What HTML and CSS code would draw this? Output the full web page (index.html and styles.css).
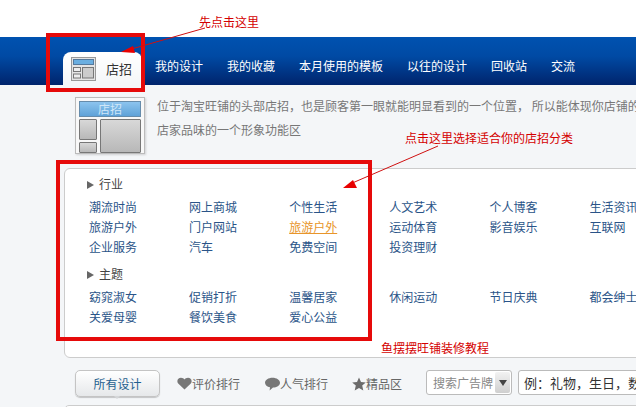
FILE: index.html
```html
<!DOCTYPE html>
<html lang="zh-CN">
<head>
  <meta charset="UTF-8" />
  <title>店招</title>
  <link rel="stylesheet" href="styles.css">
</head>
<body>
  <div class="top-space"></div>

  <nav class="nav">
    <a class="nav-tab" href="#">
      <svg class="tab-icon" width="25" height="24" viewBox="0 0 25 24">
        <rect x="0.5" y="0.5" width="24" height="23" fill="#e4e4e4" stroke="#999" />
        <rect x="2.5" y="2.5" width="20" height="5" fill="#6aaee0" stroke="#55799c" />
        <rect x="2.5" y="10.5" width="7" height="4" fill="#eee" stroke="#777" />
        <rect x="2.5" y="17" width="7" height="4" fill="#eee" stroke="#777" />
        <rect x="11.5" y="10.5" width="11" height="10.5" fill="#ccc" stroke="#777" />
      </svg>
      <span>店招</span>
    </a>
    <a href="#">我的设计</a>
    <a href="#">我的收藏</a>
    <a href="#">本月使用的模板</a>
    <a href="#">以往的设计</a>
    <a href="#">回收站</a>
    <a href="#">交流</a>
  </nav>

  <section class="intro">
    <div class="intro-pic">
      <div class="pic-head">店招</div>
      <div class="pic-body">
        <div class="pic-side">
          <div class="pic-block pic-tall"></div>
          <div class="pic-block pic-short"></div>
        </div>
        <div class="pic-block pic-main"></div>
      </div>
    </div>
    <p class="intro-text">位于淘宝旺铺的头部店招，也是顾客第一眼就能明显看到的一个位置， 所以能体现你店铺的<br>店家品味的一个形象功能区</p>
  </section>

  <section class="panel">
    <h3 class="cat-title">行业</h3>
    <ul class="cat-list">
      <li><a href="#">潮流时尚</a></li>
      <li><a href="#">网上商城</a></li>
      <li><a href="#">个性生活</a></li>
      <li><a href="#">人文艺术</a></li>
      <li><a href="#">个人博客</a></li>
      <li><a href="#">生活资讯</a></li>
      <li><a href="#">旅游户外</a></li>
      <li><a href="#">门户网站</a></li>
      <li><a class="current" href="#">旅游户外</a></li>
      <li><a href="#">运动体育</a></li>
      <li><a href="#">影音娱乐</a></li>
      <li><a href="#">互联网</a></li>
      <li><a href="#">企业服务</a></li>
      <li><a href="#">汽车</a></li>
      <li><a href="#">免费空间</a></li>
      <li><a href="#">投资理财</a></li>
    </ul>
    <h3 class="cat-title cat-second">主题</h3>
    <ul class="cat-list">
      <li><a href="#">窈窕淑女</a></li>
      <li><a href="#">促销打折</a></li>
      <li><a href="#">温馨居家</a></li>
      <li><a href="#">休闲运动</a></li>
      <li><a href="#">节日庆典</a></li>
      <li><a href="#">都会绅士</a></li>
      <li><a href="#">关爱母婴</a></li>
      <li><a href="#">餐饮美食</a></li>
      <li><a href="#">爱心公益</a></li>
    </ul>
  </section>

  <section class="toolbar">
    <button class="all-btn">所有设计</button>
    <a class="tool tool-rate" href="#">
      <svg width="15" height="13" viewBox="0 0 15 13"><path d="M7.5 12.5 L1.2 6.5 C-0.8 3.8 1 0.8 4 0.8 C5.6 0.8 6.8 1.5 7.5 2.6 C8.2 1.5 9.4 0.8 11 0.8 C14 0.8 15.8 3.8 13.8 6.5 Z" fill="#777" /></svg>
      评价排行
    </a>
    <a class="tool tool-pop" href="#">
      <svg width="15" height="14" viewBox="0 0 15 14"><path d="M7.5 0.8 C11.6 0.8 15 3 15 5.8 C15 8.6 11.6 10.6 8 10.6 L4.6 13.6 L5 10.3 C2.2 9.8 0 8 0 5.8 C0 3 3.4 0.8 7.5 0.8 Z" fill="#777" /></svg>
      人气排行
    </a>
    <a class="tool tool-best" href="#">
      <svg width="14" height="14" viewBox="0 0 14 14"><path d="M7 0.5 L9 5 L13.8 5.4 L10.2 8.6 L11.3 13.4 L7 10.9 L2.7 13.4 L3.8 8.6 L0.2 5.4 L5 5 Z" fill="#6b6b6b" /></svg>
      精品区
    </a>
    <div class="search-type">
      <span>搜索广告牌</span>
      <i class="search-arrow"></i>
    </div>
    <input class="search-input" type="text" value="例：礼物，生日，数码" />
  </section>
  <div class="list-top"></div>

  <!-- notes drawn over the screenshot -->
  <div class="mark mark-tab"></div>
  <div class="mark mark-panel"></div>
  <span class="note note-first">先点击这里</span>
  <span class="note note-second">点击这里选择适合你的店招分类</span>
  <span class="note note-third">鱼摆摆旺铺装修教程</span>
  <svg class="arrows" width="636" height="407" viewBox="0 0 636 407">
    <line x1="205" y1="28" x2="128" y2="50" stroke="#d01010" stroke-width="1" />
    <polygon points="121,52 133,46 135,53" fill="#e80000" />
    <line x1="438" y1="146" x2="350" y2="184" stroke="#d01010" stroke-width="1" />
    <polygon points="343,188 353,180 357,188" fill="#e80000" />
  </svg>
</body>
</html>
```

FILE: styles.css
```css
:root {
  --page-bg: #f4f6f8;
  --link: #2a5488;
  --note-red: #d40000;
  --mark-red: #e60a0a;
  --font-family: 'Noto Sans CJK SC', 'Liberation Sans', sans-serif;
}

html,
body {
  height: 407px;
  overflow: hidden;
}

body {
  position: relative;
  margin: 0;
  background-color: var(--page-bg);
  font-family: var(--font-family);
  font-size: 12px;
  color: #666;
}

a {
  text-decoration: none;
}

.top-space {
  height: 37px;
  background-color: #fff;
}

.nav {
  display: flex;
  align-items: flex-end;
  height: 48px;
  padding-left: 63px;
  background: linear-gradient(to bottom, #0052b0 0%, #004aa4 40%, #00246c 100%);
}

.nav a {
  flex: none;
  margin-right: 24px;
  height: 38px;
  line-height: 38px;
  color: #fff;
  white-space: nowrap;
}

.nav .nav-tab {
  display: flex;
  align-items: center;
  gap: 10px;
  width: 79px;
  height: 33px;
  line-height: 33px;
  margin-right: 13px;
  padding-left: 8px;
  box-sizing: border-box;
  border-radius: 8px 8px 0 0;
  background-color: var(--page-bg);
  background-image: linear-gradient(to bottom, #fff, var(--page-bg));
  color: #333;
  font-size: 13px;
}

.tab-icon {
  flex: none;
}

.intro {
  display: flex;
  height: 83px;
  padding: 12px 0 0 75px;
  box-sizing: border-box;
}

.intro-pic {
  flex: none;
  width: 70px;
  height: 57px;
  padding: 3px;
  box-sizing: border-box;
  border: 1px solid #bbb;
  background-color: #f8f8f8;
  box-shadow: 1px 1px 2px rgba(0, 0, 0, 0.15);
}

.pic-head {
  height: 14px;
  line-height: 13px;
  border: 1px solid #668cab;
  background: linear-gradient(to bottom, #8cc4ee, #5fa2d8);
  color: #cfe6f8;
  font-size: 12px;
  text-align: center;
}

.pic-body {
  display: flex;
  gap: 3px;
  margin-top: 2px;
}

.pic-side {
  display: flex;
  flex-direction: column;
  gap: 2px;
}

.pic-block {
  box-sizing: border-box;
  border: 1px solid #777;
  border-radius: 1px;
  background: linear-gradient(to bottom, #d8d8d8, #b8b8b8);
}

.pic-tall {
  width: 18px;
  height: 21px;
}

.pic-short {
  width: 18px;
  height: 11px;
}

.pic-main {
  width: 42px;
  height: 34px;
}

.intro-text {
  margin: -3px 0 0 12px;
  line-height: 24px;
  color: #777;
  white-space: nowrap;
}

.panel {
  height: 190px;
  margin: 0 -30px 0 64px;
  padding: 5px 0 0 21px;
  box-sizing: border-box;
  border: 1px solid #ccc;
  border-radius: 6px;
  background-color: #fff;
}

.cat-title {
  display: flex;
  align-items: center;
  gap: 5px;
  height: 18px;
  margin: 0 0 5px;
  padding-left: 1px;
  font-size: 12px;
  font-weight: normal;
  color: #444;
}

.cat-title::before {
  content: "";
  margin-top: 3px;
  border-left: 7px solid #666;
  border-top: 4px solid transparent;
  border-bottom: 4px solid transparent;
}

.cat-second {
  margin-top: 7px;
}

.cat-list {
  display: grid;
  grid-template-columns: repeat(6, 100.1px);
  grid-auto-rows: 20px;
  margin: 0 0 0 3px;
  padding: 0;
  list-style: none;
}

.cat-list li {
  line-height: 20px;
  white-space: nowrap;
}

.cat-list a {
  color: var(--link);
}

.cat-list .current {
  color: #e8952a;
  text-decoration: underline;
}

.toolbar {
  display: flex;
  align-items: flex-start;
  padding: 12px 0 0 75px;
}

.all-btn {
  position: relative;
  flex: none;
  width: 85px;
  height: 27px;
  margin-right: 17px;
  padding: 0;
  border: 1px solid #c4c4c4;
  border-radius: 5px;
  background: linear-gradient(to bottom, #fff, #e6e8ea);
  box-shadow: 0 1px 1px rgba(0, 0, 0, 0.2);
  font-family: var(--font-family);
  font-size: 12px;
  color: #1f5f8f;
}

.all-btn::after {
  content: "";
  position: absolute;
  left: 38px;
  bottom: -3px;
  border-top: 3px solid #d4d6d8;
  border-left: 3px solid transparent;
  border-right: 3px solid transparent;
}

.tool {
  display: flex;
  flex: none;
  align-items: center;
  height: 27px;
  color: #666;
  white-space: nowrap;
}

.tool-rate {
  margin-right: 25px;
}

.tool-pop {
  margin-right: 24px;
}

.tool-best {
  margin-right: 24px;
}

.search-type {
  display: flex;
  flex: none;
  align-items: center;
  justify-content: space-between;
  width: 86px;
  height: 25px;
  margin-right: 6px;
  padding: 0 1px 0 6px;
  box-sizing: border-box;
  border: 1px solid #bbb;
  border-radius: 3px;
  background-color: #fff;
  color: #888;
  white-space: nowrap;
}

.search-arrow {
  display: flex;
  flex: none;
  align-items: center;
  justify-content: center;
  width: 15px;
  height: 21px;
  border-radius: 2px;
  background: linear-gradient(to bottom, #f2f2f2, #cfcfcf);
}

.search-arrow::after {
  content: "";
  border-top: 6px solid #444;
  border-left: 4px solid transparent;
  border-right: 4px solid transparent;
}

.search-input {
  flex: none;
  width: 140px;
  height: 25px;
  padding: 0 5px;
  box-sizing: border-box;
  border: 1px solid #bbb;
  border-radius: 3px;
  background-color: #fff;
  font-family: var(--font-family);
  font-size: 13px;
  color: #333;
}

.list-top {
  position: absolute;
  left: 64px;
  right: -10px;
  top: 405px;
  height: 6px;
  border: 1px solid #ccc;
  border-radius: 5px 5px 0 0;
  background-color: #fff;
}

/* red notes on top of the page */
.mark {
  position: absolute;
  box-sizing: border-box;
  border: 4px solid var(--mark-red);
}

.mark-tab {
  left: 46px;
  top: 33px;
  width: 99px;
  height: 59px;
}

.mark-panel {
  left: 56px;
  top: 160px;
  width: 316px;
  height: 181px;
}

.note {
  position: absolute;
  color: var(--note-red);
  white-space: nowrap;
}

.note-first {
  left: 199px;
  top: 13px;
}

.note-second {
  left: 405px;
  top: 129px;
}

.note-third {
  left: 381px;
  top: 339px;
}

.arrows {
  position: absolute;
  left: 0;
  top: 0;
}
```
